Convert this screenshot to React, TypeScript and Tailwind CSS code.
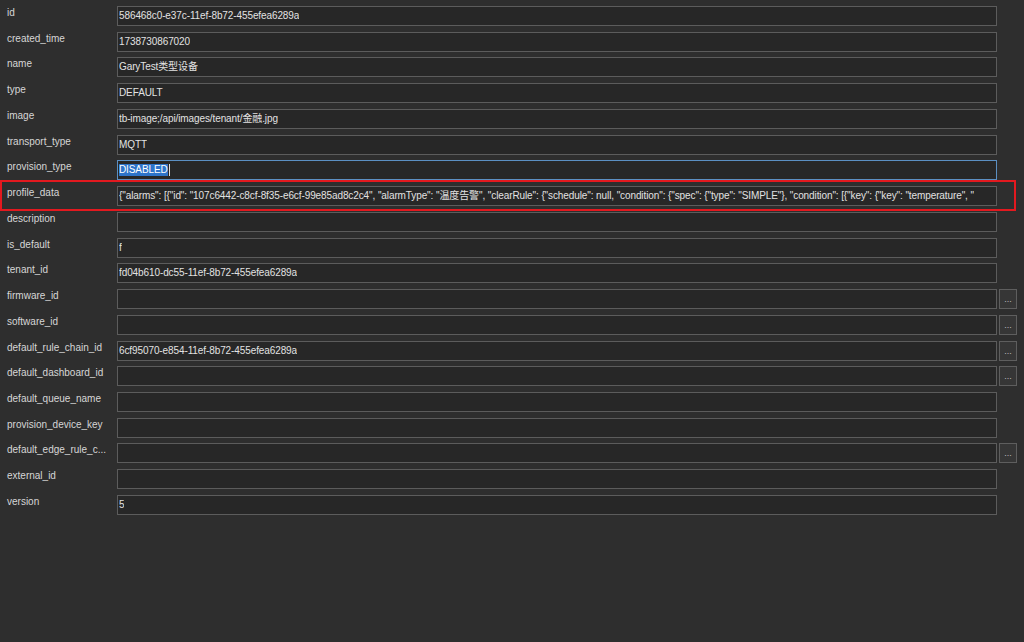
import { FC } from 'react';

type Field = { name: string; value?: string; more?: boolean; focused?: boolean; marked?: boolean };

const fields: Field[] = [
  { name: 'id', value: '586468c0-e37c-11ef-8b72-455efea6289a' },
  { name: 'created_time', value: '1738730867020' },
  { name: 'name', value: 'GaryTest类型设备' },
  { name: 'type', value: 'DEFAULT' },
  { name: 'image', value: 'tb-image;/api/images/tenant/金融.jpg' },
  { name: 'transport_type', value: 'MQTT' },
  { name: 'provision_type', value: 'DISABLED', focused: true },
  {
    name: 'profile_data',
    value:
      '{"alarms": [{"id": "107c6442-c8cf-8f35-e6cf-99e85ad8c2c4", "alarmType": "温度告警", "clearRule": {"schedule": null, "condition": {"spec": {"type": "SIMPLE"}, "condition": [{"key": {"key": "temperature", "',
    marked: true,
  },
  { name: 'description' },
  { name: 'is_default', value: 'f' },
  { name: 'tenant_id', value: 'fd04b610-dc55-11ef-8b72-455efea6289a' },
  { name: 'firmware_id', more: true },
  { name: 'software_id', more: true },
  { name: 'default_rule_chain_id', value: '6cf95070-e854-11ef-8b72-455efea6289a', more: true },
  { name: 'default_dashboard_id', more: true },
  { name: 'default_queue_name' },
  { name: 'provision_device_key' },
  { name: 'default_edge_rule_c...', more: true },
  { name: 'external_id' },
  { name: 'version', value: '5' },
];

const font = { fontFamily: '"Liberation Sans", "Noto Sans CJK SC", sans-serif' };

const Row: FC<{ field: Field }> = ({ field }) => (
  <div className="relative flex h-[20px] items-start">
    {field.marked && (
      <div className="pointer-events-none absolute left-[-7px] top-[-6px] h-[31px] w-[1016px] border-2 border-[#e3191f]" />
    )}
    <div className="w-[110px] pt-[1px] text-[10px] leading-[12px] text-[#d6d6d6]">{field.name}</div>
    <div
      className={`flex h-[20px] w-[880px] items-center overflow-hidden whitespace-nowrap border bg-[#272727] px-[1px] text-[10px] leading-[12px] tracking-[-0.1px] text-[#e2e2e2] ${
        field.focused ? 'border-[#5b8fc2]' : 'border-[#5c5c5c]'
      }`}
    >
      {field.focused ? (
        <>
          <span className="bg-[#2e74c9] text-white">{field.value}</span>
          <span className="ml-[1px] h-[12px] w-[1px] bg-[#e0e0e0]" />
        </>
      ) : (
        <span className="truncate">{field.value}</span>
      )}
    </div>
    {field.more && (
      <div className="ml-[2px] flex h-[20px] w-[18px] items-end justify-center border border-[#5e5e5e] bg-[#363636] pb-[6px] text-[9px] leading-[6px] text-[#bdbdbd]">
        ...
      </div>
    )}
  </div>
);

const App: FC = () => (
  <div className="h-[642px] w-[1024px] overflow-hidden bg-[#2e2e2e]" style={font}>
    <div className="flex flex-col gap-[5.74px] pl-[7px] pt-[6px]">
      {fields.map((f) => (
        <Row key={f.name} field={f} />
      ))}
    </div>
  </div>
);

export default App;
